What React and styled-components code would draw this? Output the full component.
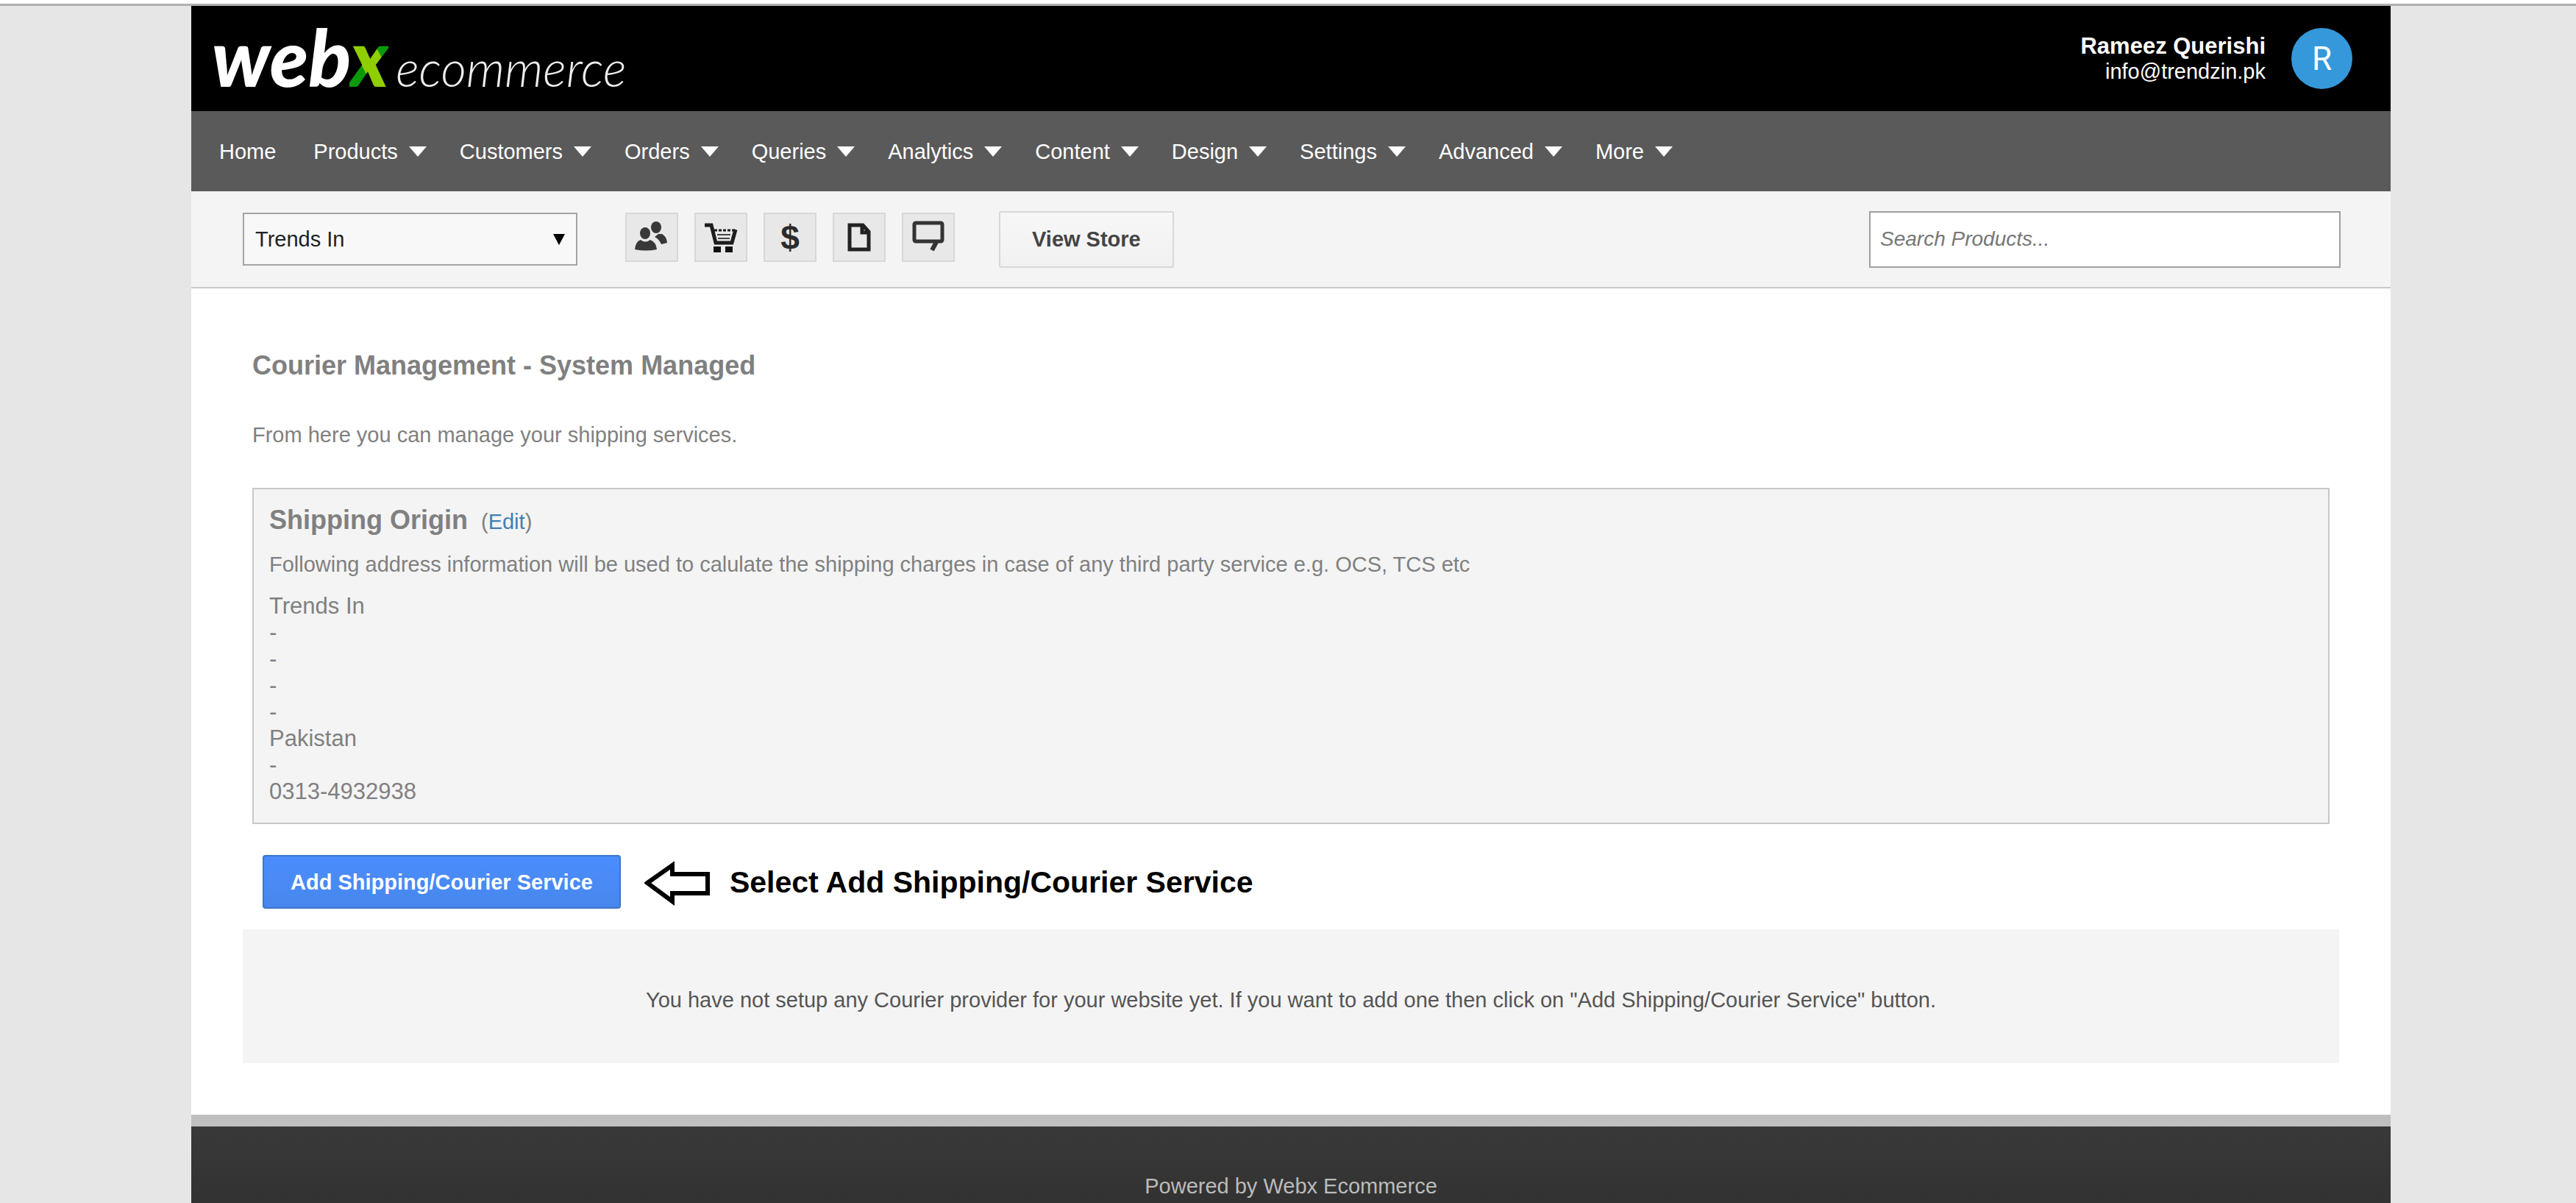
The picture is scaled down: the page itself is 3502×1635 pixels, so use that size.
import React from "react";
import styled, { createGlobalStyle } from "styled-components";

const GlobalStyle = createGlobalStyle`
  *, *::before, *::after { box-sizing: border-box; }
  body {
    margin: 0;
    background: #e6e6e6;
    color: #808080;
    font-family: "Liberation Sans", Arial, Helvetica, sans-serif;
    font-size: 29px;
    line-height: 36px;
  }
  h1, h2, p, ul { margin: 0; padding: 0; }
  button, input, select { font: inherit; }
`;

const Page = styled.div`
  display: flex;
  flex-direction: column;
  min-height: 100vh;
  border-top: 5px solid #fff;
`;

const TopLine = styled.div`
  height: 3px;
  background: #b0b0b0;
`;

const Shell = styled.div`
  display: flex;
  flex-direction: column;
  flex: 1;
  margin: 0 252px 0 260px;
  background: #fff;
`;

const Header = styled.header`
  display: flex;
  align-items: center;
  justify-content: space-between;
  height: 143px;
  padding: 0 52px 0 28px;
  background: #000;
  color: #fff;
`;

const Logo = styled.a`
  display: flex;
  align-items: baseline;
  gap: 10px;
  padding-top: 10px;
  color: #fff;
  font-family: Lato, "Liberation Sans", sans-serif;
  font-style: italic;
  line-height: 96px;
  text-decoration: none;
`;

const LogoMark = styled.span`
  font-size: 107px;
  font-weight: 900;
`;

const LogoX = styled.span`
  background: linear-gradient(62deg, #0a9a0a 36%, #8fce00 37%, #8fce00 63%, #0a9a0a 64%);
  background-clip: text;
  color: transparent;
`;

const LogoWord = styled.span`
  font-size: 67px;
  font-weight: 300;
  color: #eee;
`;

const Account = styled.div`
  display: flex;
  align-items: center;
  gap: 35px;
`;

const AccountText = styled.div`
  text-align: right;
  line-height: 34px;
`;

const AccountName = styled.div`
  font-size: 31px;
  font-weight: 700;
`;

const Avatar = styled.div`
  display: grid;
  place-items: center;
  width: 83px;
  height: 83px;
  border-radius: 50%;
  background: #3498db;
  font-family: Roboto, sans-serif;
  font-size: 44px;
`;

const Nav = styled.nav`
  display: flex;
  align-items: center;
  gap: 45px;
  height: 109px;
  padding: 0 38px;
  background: #5a5a5a;
`;

const NavLink = styled.a`
  display: flex;
  align-items: center;
  gap: 15px;
  color: #fff;
  text-decoration: none;

  &:first-child { padding-right: 6px; }
`;

const Caret = styled.span`
  border: 12px solid transparent;
  border-top: 14px solid #fff;
  border-bottom: 0;
`;

const Toolbar = styled.div`
  display: flex;
  align-items: center;
  height: 132px;
  padding: 0 68px 0 70px;
  border-bottom: 2px solid #c8c8c8;
  background: #f4f4f4;
`;

const StorePicker = styled.label`
  display: grid;
  align-items: center;
  width: 455px;
  margin-right: 65px;

  & > * { grid-area: 1 / 1; }
`;

const StoreSelect = styled.select`
  width: 100%;
  height: 72px;
  padding: 0 15px;
  border: 2px solid #a4a4a4;
  border-radius: 0;
  background: #f8f8f8;
  color: #222;
  appearance: none;
`;

const SelectArrow = styled.span`
  justify-self: end;
  margin: 0 17px 0 0;
  border: 8px solid transparent;
  border-top: 15px solid #000;
  border-bottom: 0;
  pointer-events: none;
`;

const IconRow = styled.div`
  display: flex;
  gap: 22px;
  margin: 0 60px 5px 0;
`;

const IconButton = styled.button`
  display: grid;
  place-items: center;
  width: 72px;
  height: 67px;
  padding: 0;
  border: 2px solid #d8d8d8;
  background: #e8e8e8;
  color: #2b2b2b;
  font-size: 46px;
  font-weight: 700;
`;

const StoreButton = styled.button`
  height: 77px;
  padding: 0 43px;
  border: 2px solid #d8d8d8;
  border-radius: 3px;
  background: linear-gradient(#f7f7f7, #f1f1f1);
  color: #444;
  font-weight: 700;
`;

const Search = styled.input`
  width: 641px;
  height: 77px;
  margin-left: auto;
  padding: 0 13px;
  border: 2px solid #a0a0a0;
  background: #fff;
  font-size: 28px;

  &::placeholder {
    color: #777;
    font-style: italic;
    opacity: 1;
  }
`;

const Content = styled.main`
  padding: 83px 70px 70px;
`;

const Section = styled.section`
  margin: 0 13px;
`;

const Title = styled.h1`
  font-size: 36px;
  line-height: 44px;
`;

const Intro = styled.p`
  margin: 54px 0;
`;

const Origin = styled.div`
  padding: 20px 22px 24px 21px;
  border: 2px solid #c8c8c8;
  background: #f4f4f4;
`;

const OriginHead = styled.div`
  display: flex;
  align-items: baseline;
  gap: 18px;
  line-height: 44px;
`;

const OriginTitle = styled.h2`
  font-size: 36px;
`;

const EditLink = styled.a`
  color: #3f80b4;
  text-decoration: none;
`;

const OriginNote = styled.p`
  margin: 18px 0 21px;
`;

const Address = styled.ul`
  list-style: none;
  font-size: 31px;
`;

const ActionRow = styled.div`
  display: flex;
  align-items: center;
  margin: 42px 14px 28px;
`;

const AddButton = styled.button`
  height: 73px;
  padding: 0 36px;
  border: 2px solid #3f75c8;
  border-radius: 4px;
  background: linear-gradient(#4b8dfd, #4787ed);
  color: #fff;
  font-weight: 700;
`;

const Arrow = styled.svg`
  margin: 0 27px 0 32px;
`;

const Hint = styled.strong`
  color: #000;
  font-size: 41px;
`;

const Notice = styled.p`
  padding: 78px 24px 68px;
  background: #f4f4f4;
  color: #555;
  text-align: center;
`;

const Footer = styled.footer`
  flex: 1;
  padding-top: 63px;
  border-top: 16px solid #bfbfbf;
  background: linear-gradient(#393939, #323232);
  color: #bbb;
  text-align: center;
`;

const menu = [
  "Products", "Customers", "Orders", "Queries", "Analytics",
  "Content", "Design", "Settings", "Advanced", "More",
];

const address = ["Trends In", "-", "-", "-", "-", "Pakistan", "-", "0313-4932938"];

const Icon = ({ children }) => (
  <svg width="68" height="63" viewBox="2 2 68 63" fill="none" aria-hidden="true">
    {children}
  </svg>
);

const UsersIcon = () => (
  <Icon>
    <g fill="#383838">
      <ellipse cx="42" cy="20" rx="7" ry="8" />
      <path d="M40 33 L45 29 H50 Q56 32 57 41 L49 43 Q46 36 40 33Z" />
      <ellipse cx="27" cy="28" rx="7" ry="8" />
      <path d="M13 50 Q14 39 21 37 Q27 42 34 37 Q42 40 43 50 Q28 53 13 50Z" />
    </g>
  </Icon>
);

const CartIcon = () => (
  <Icon>
    <path d="M14 17 H23 L29 41 H51 L56 23" stroke="#1c1c1c" strokeWidth="5" />
    <path d="M27 24 H56" stroke="#1c1c1c" strokeWidth="3" strokeDasharray="4 2" />
    <path d="M31 30 H49 M32 35 H48" stroke="#444" strokeWidth="2" />
    <path d="M26 46 h10 v8 h-10z M42 46 h10 v8 h-10z" fill="#111" />
  </Icon>
);

const PageIcon = () => (
  <Icon>
    <path d="M23 17 H41 L49 26 V50 H23Z M40 17 V27 H49" stroke="#222" strokeWidth="5" />
  </Icon>
);

const CommentIcon = () => (
  <Icon>
    <rect x="17" y="14" width="38" height="25" rx="2" stroke="#333" strokeWidth="5" />
    <path d="M47 40 L41 51" stroke="#333" strokeWidth="6" />
  </Icon>
);

export default function App() {
  return (
    <Page>
      <GlobalStyle />
      <TopLine />
      <Shell>
        <Header>
          <Logo href="#">
            <LogoMark>web<LogoX>x</LogoX></LogoMark>
            <LogoWord>ecommerce</LogoWord>
          </Logo>
          <Account>
            <AccountText>
              <AccountName>Rameez Querishi</AccountName>
              <div>info@trendzin.pk</div>
            </AccountText>
            <Avatar>R</Avatar>
          </Account>
        </Header>
        <Nav>
          <NavLink href="#">Home</NavLink>
          {menu.map((name) => (
            <NavLink href="#" key={name}>{name}<Caret /></NavLink>
          ))}
        </Nav>
        <Toolbar>
          <StorePicker>
            <StoreSelect aria-label="Store"><option>Trends In</option></StoreSelect>
            <SelectArrow />
          </StorePicker>
          <IconRow>
            <IconButton aria-label="Customers"><UsersIcon /></IconButton>
            <IconButton aria-label="Orders"><CartIcon /></IconButton>
            <IconButton aria-label="Payments">$</IconButton>
            <IconButton aria-label="Pages"><PageIcon /></IconButton>
            <IconButton aria-label="Queries"><CommentIcon /></IconButton>
          </IconRow>
          <StoreButton>View Store</StoreButton>
          <Search type="text" aria-label="Search Products" placeholder="Search Products..." />
        </Toolbar>
        <Content>
          <Section>
            <Title>Courier Management - System Managed</Title>
            <Intro>From here you can manage your shipping services.</Intro>
            <Origin>
              <OriginHead>
                <OriginTitle>Shipping Origin</OriginTitle>
                <span>(<EditLink href="#">Edit</EditLink>)</span>
              </OriginHead>
              <OriginNote>
                Following address information will be used to calulate the shipping charges in case of any third party service e.g. OCS, TCS etc
              </OriginNote>
              <Address>
                {address.map((line, i) => <li key={i}>{line}</li>)}
              </Address>
            </Origin>
            <ActionRow>
              <AddButton>Add Shipping/Courier Service</AddButton>
              <Arrow width="89" height="64" viewBox="0 0 89 64" fill="none" aria-hidden="true">
                <path d="M4 33 L38 9 V21 H86 V47 H38 V58Z" stroke="#000" strokeWidth="6" />
              </Arrow>
              <Hint>Select Add Shipping/Courier Service</Hint>
            </ActionRow>
          </Section>
          <Notice>
            You have not setup any Courier provider for your website yet. If you want to add one then click on "Add Shipping/Courier Service" button.
          </Notice>
        </Content>
        <Footer>Powered by Webx Ecommerce</Footer>
      </Shell>
    </Page>
  );
}
